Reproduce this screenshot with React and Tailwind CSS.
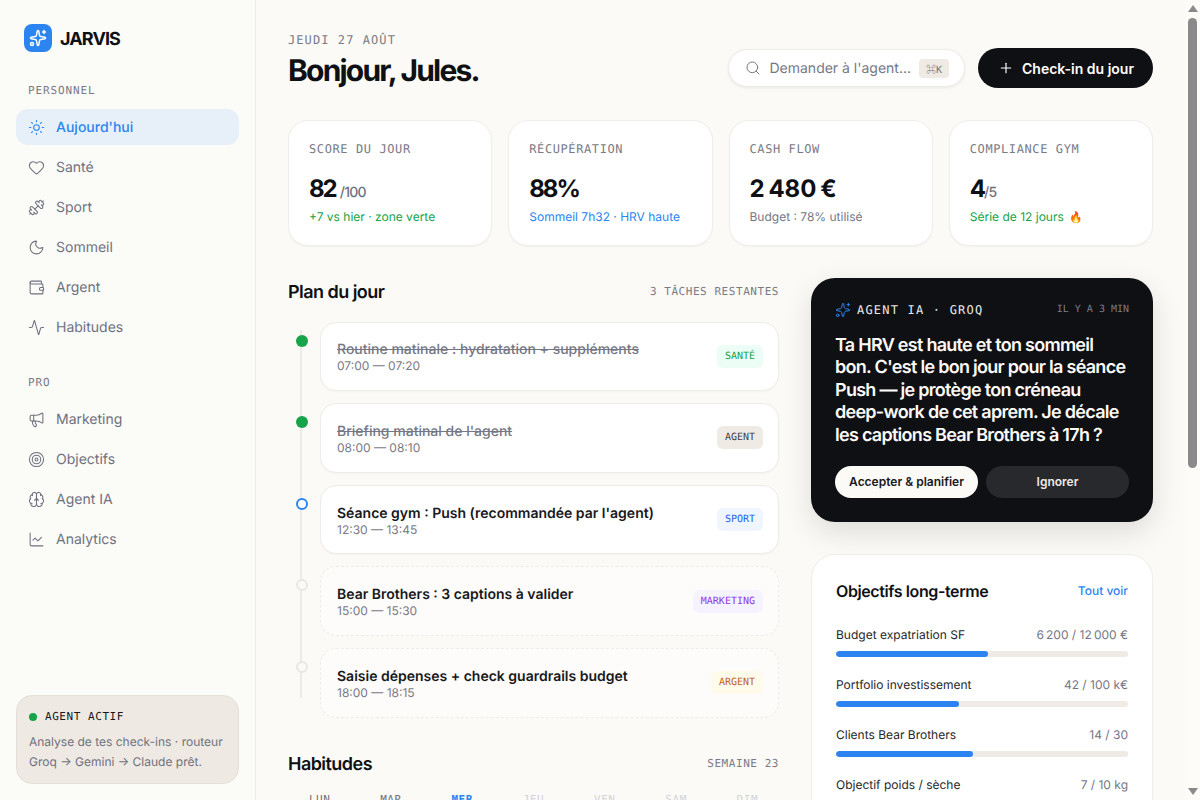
import {
  Sun,
  Heart,
  Dumbbell,
  Moon,
  Wallet,
  Activity,
  Megaphone,
  Target,
  Brain,
  LineChart,
  Sparkles,
  Search,
  Plus,
} from "lucide-react";

const mono = "font-['DejaVu_Sans_Mono',monospace]";

const personal = [
  { label: "Aujourd'hui", icon: Sun, active: true },
  { label: "Santé", icon: Heart },
  { label: "Sport", icon: Dumbbell },
  { label: "Sommeil", icon: Moon },
  { label: "Argent", icon: Wallet },
  { label: "Habitudes", icon: Activity },
];

const pro = [
  { label: "Marketing", icon: Megaphone },
  { label: "Objectifs", icon: Target },
  { label: "Agent IA", icon: Brain },
  { label: "Analytics", icon: LineChart },
];

const tasks = [
  { title: "Routine matinale : hydratation + suppléments", time: "07:00 — 07:20", tag: "SANTÉ", tagClass: "bg-[#ecfdf5] text-[#16a34a]", state: "done" },
  { title: "Briefing matinal de l'agent", time: "08:00 — 08:10", tag: "AGENT", tagClass: "bg-[#efebe4] text-[#3f3f46]", state: "done" },
  { title: "Séance gym : Push (recommandée par l'agent)", time: "12:30 — 13:45", tag: "SPORT", tagClass: "bg-[#eff6ff] text-[#2563eb]", state: "now" },
  { title: "Bear Brothers : 3 captions à valider", time: "15:00 — 15:30", tag: "MARKETING", tagClass: "bg-[#f5f3ff] text-[#9333ea]", state: "later" },
  { title: "Saisie dépenses + check guardrails budget", time: "18:00 — 18:15", tag: "ARGENT", tagClass: "bg-[#fffbeb] text-[#c2621a]", state: "later" },
];

const goals = [
  { label: "Budget expatriation SF", value: "6\u202f200 / 12\u202f000 €", pct: 52 },
  { label: "Portfolio investissement", value: "42 / 100 k€", pct: 42 },
  { label: "Clients Bear Brothers", value: "14 / 30", pct: 47 },
  { label: "Objectif poids / sèche", value: "7 / 10 kg", pct: 70 },
];

const days = [
  { d: "LUN", cls: "text-[#71717a]", on: true },
  { d: "MAR", cls: "text-[#71717a]", on: true },
  { d: "MER", cls: "text-[#2b84f0] font-bold", on: true },
  { d: "JEU", cls: "text-[#d4d4d8]" },
  { d: "VEN", cls: "text-[#d4d4d8]" },
  { d: "SAM", cls: "text-[#d4d4d8]" },
  { d: "DIM", cls: "text-[#d4d4d8]" },
];

function NavItem({ item }) {
  const Icon = item.icon;
  return (
    <div
      className={`flex items-center gap-[11px] h-9 px-3 rounded-xl text-sm ${
        item.active ? "bg-[#e7eff8] text-[#2b84f0] font-medium" : "text-[#6f7180]"
      }`}
    >
      <Icon size={17} strokeWidth={1.5} />
      <span className="pt-[2px]">{item.label}</span>
    </div>
  );
}

function Stat({ label, value, unit, unitClass, sub, subClass }) {
  return (
    <div className="bg-white rounded-[20px] border border-[#f0eeea] shadow-[0_1px_2px_rgba(0,0,0,0.04)] p-5 h-[125.6px]">
      <div className={`${mono} text-xs leading-4 tracking-[0.05em] text-[#7a7a86]`}>{label}</div>
      <div className="mt-4 flex items-baseline h-8 text-[#0f1014]">
        <span className="text-2xl font-bold tracking-[-0.085em]">{value}</span>
        {unit && <span className={`text-sm font-medium text-[#6f7180] tracking-[-0.05em] ${unitClass}`}>{unit}</span>}
      </div>
      <div className={`mt-1 text-xs leading-4 ${subClass}`}>{sub}</div>
    </div>
  );
}

function TaskRow({ task }) {
  const done = task.state === "done";
  const later = task.state === "later";
  return (
    <div className="flex">
      <div className="w-8 shrink-0 pl-2 pt-[13px] relative z-10">
        {done && <div className="w-3 h-3 rounded-full bg-[#16a34a]" />}
        {task.state === "now" && <div className="w-3 h-3 rounded-full bg-white border-2 border-[#2b84f0]" />}
        {later && <div className="w-3 h-3 rounded-full bg-[#fbfaf7] border-2 border-[#e9e7e1]" />}
      </div>
      <div
        className={`flex-1 h-[69.6px] rounded-2xl pl-4 pr-[15px] flex items-center justify-between border ${
          later ? "border-dashed border-[#eeece7] bg-[#fdfcfa]" : "border-[#eeece7] bg-white shadow-[0_1px_2px_rgba(0,0,0,0.03)]"
        }`}
      >
        <div className="pt-1">
          <div className={`text-sm leading-4 ${done ? "font-medium line-through text-[#757785]" : "font-semibold text-[#18181b]"}`}>
            {task.title}
          </div>
          <div className="text-xs leading-4 text-[#7a7a86]">{task.time}</div>
        </div>
        <span className={`${mono} text-[10px] leading-[23px] h-[23px] px-2 rounded-md ${task.tagClass}`}>
          {task.tag}
        </span>
      </div>
    </div>
  );
}

function Scrollbar() {
  return (
    <div className="w-[15px] shrink-0 bg-[#fdfcf9] flex flex-col items-center">
      <div className="mt-[5px] w-0 h-0 border-x-[5px] border-x-transparent border-b-[7px] border-b-[#8a8a8a]" />
      <div className="mt-[6px] w-[9px] h-[450px] rounded-[5px] bg-[#8a8a8a]" />
      <div className="mt-auto mb-[5px] w-0 h-0 border-x-[5px] border-x-transparent border-t-[7px] border-t-[#8a8a8a]" />
    </div>
  );
}

export default function App() {
  return (
    <div className="flex h-screen overflow-hidden bg-[#fbfaf7] font-['Inter',sans-serif] text-[#0f1014] [text-rendering:geometricPrecision]">
      <aside className="h-screen w-64 shrink-0 bg-[#fbfbf7] border-r border-[#eeece7] px-4 pt-6 pb-4 flex flex-col">
        <div className="flex items-center gap-2 px-2">
          <div className="w-7 h-7 rounded-lg bg-[#2b84f0] flex items-center justify-center text-white">
            <Sparkles size={18} strokeWidth={2} />
          </div>
          <span className="mt-1 text-lg leading-5 font-bold tracking-[-0.05em]">JARVIS</span>
        </div>

        <div className={`${mono} mt-[31px] px-3 text-[11px] leading-4 tracking-[0.08em] text-[#7a7a86]`}>PERSONNEL</div>
        <nav className="mt-[10px] flex flex-col gap-1">
          {personal.map((item) => (
            <NavItem key={item.label} item={item} />
          ))}
        </nav>

        <div className={`${mono} mt-[30px] px-3 text-[11px] leading-4 tracking-[0.08em] text-[#7a7a86]`}>PRO</div>
        <nav className="mt-[10px] flex flex-col gap-1">
          {pro.map((item) => (
            <NavItem key={item.label} item={item} />
          ))}
        </nav>

        <div className="mt-auto rounded-2xl border border-[#e4e0d9] bg-[#eeeae3] px-3 pt-[13px] pb-3 h-[89px]">
          <div className="flex items-center gap-2">
            <span className="w-2 h-2 rounded-full bg-[#16a34a]" />
            <span className={`${mono} text-[11px] leading-4 font-medium tracking-[0.05em] text-[#18181b]`}>AGENT ACTIF</span>
          </div>
          <p className="mt-[7px] text-xs leading-5 text-[#6f7180]">
            Analyse de tes check-ins · routeur Groq → Gemini → Claude prêt.
          </p>
        </div>
      </aside>

      <main className="flex-1 min-w-0 overflow-hidden px-8 pt-8">
        {/* Header */}
        <div className="flex items-start justify-between h-[88px]">
          <div>
            <div className={`${mono} text-xs leading-4 tracking-[0.09em] text-[#7a7a86]`}>JEUDI 27 AOÛT</div>
            <h1 className="mt-[5px] text-[30px] leading-9 font-bold tracking-[-0.06em]">Bonjour, Jules.</h1>
          </div>
          <div className="flex items-center gap-[13px] mt-4">
            <div className="flex items-center gap-2 h-[38px] pl-4 pr-[15px] rounded-full bg-white border border-[#eeece7] shadow-[0_1px_3px_rgba(0,0,0,0.08)] text-sm text-[#757785]">
              <Search size={16} strokeWidth={1.5} />
              <span className="pt-[2px]">Demander à l'agent...</span>
              <span className={`${mono} h-[19px] w-[30px] text-center rounded bg-[#efebe4] text-[10px] leading-[19px] text-[#6f7180]`}>
                <span className="font-['Noto_Sans_Mono_CJK_SC']">⌘</span>K
              </span>
            </div>
            <button className="flex items-center gap-2 h-10 pl-5 pr-[19px] rounded-full bg-[#0f1014] text-white text-sm font-semibold">
              <Plus size={16} strokeWidth={1.75} />
              <span className="pt-px">Check-in du jour</span>
            </button>
          </div>
        </div>

        {/* Stats */}
        <div className="grid grid-cols-4 gap-4">
          <Stat label="SCORE DU JOUR" value="82" unit="/100" unitClass="ml-1" sub="+7 vs hier · zone verte" subClass="text-[#16a34a]" />
          <Stat label="RÉCUPÉRATION" value="88%" sub="Sommeil 7h32 · HRV haute" subClass="text-[#2b84f0]" />
          <Stat label="CASH FLOW" value={"2\u202f480\u202f€"} sub="Budget : 78% utilisé" subClass="text-[#757785]" />
          <Stat
            label="COMPLIANCE GYM"
            value="4"
            unit="/5"
            sub={
              <>
                Série de 12 jours <span className="ml-[2px] text-[11px]">🔥</span>
              </>
            }
            subClass="text-[#16a34a]"
          />
        </div>

        <div className="mt-8 grid grid-cols-[491px_342px] gap-8">
          {/* Left column */}
          <div>
            <div className="flex items-center justify-between h-7">
              <h2 className="pt-0.5 text-lg font-semibold tracking-[-0.03em]">Plan du jour</h2>
              <span className={`${mono} pt-0.5 text-[11px] tracking-[0.05em] text-[#7a7a86]`}>3 TÂCHES RESTANTES</span>
            </div>
            <div className="relative mt-4 flex flex-col gap-3">
              <div className="absolute left-3 top-2 bottom-5 w-[2px] bg-[#ecebe6]" />
              {tasks.map((task) => (
                <TaskRow key={task.title} task={task} />
              ))}
            </div>

            <div className="mt-8 flex items-center justify-between h-7">
              <h2 className="pt-0.5 text-lg font-semibold tracking-[-0.03em]">Habitudes</h2>
              <span className={`${mono} pt-0.5 text-[11px] tracking-[0.05em] text-[#7a7a86]`}>SEMAINE 23</span>
            </div>
            <div className="mt-[14px] grid grid-cols-7 gap-2">
              {days.map((day) => (
                <div key={day.d} className="flex flex-col items-center gap-2">
                  <span className={`${mono} text-[11px] leading-4 tracking-[0.05em] ${day.cls}`}>{day.d}</span>
                  <div className={`w-full h-16 rounded-xl border border-[#eeece7] ${day.on ? "bg-[#e7eff8]" : "bg-white"}`} />
                </div>
              ))}
            </div>
          </div>

          {/* Right column */}
          <div className="flex flex-col gap-8">
            <div className="bg-[#0f1014] rounded-3xl p-6 shadow-[0_10px_30px_rgba(0,0,0,0.12)] h-[244px]">
              <div className="flex items-center justify-between h-4">
                <div className="flex items-center gap-1.5">
                  <Sparkles size={16} strokeWidth={1.5} className="text-[#2b84f0]" />
                  <span className={`${mono} text-xs font-medium tracking-[0.1em] text-[#e8e8ea]`}>AGENT IA · GROQ</span>
                </div>
                <span className={`${mono} text-[10px] text-[#7c7c84]`}>IL Y A 3 MIN</span>
              </div>
              <p className="mt-[17px] text-lg leading-[22.5px] font-semibold tracking-[-0.04em] text-[#fbfaf7]">
                Ta HRV est haute et ton sommeil bon. C'est le bon jour pour la séance Push — je protège ton créneau deep-work de cet aprem. Je décale les captions Bear Brothers à 17h ?
              </p>
              <div className="mt-[19px] grid grid-cols-2 gap-2">
                <button className="h-8 rounded-full bg-[#fbfaf7] text-[#18181b] text-xs font-semibold">Accepter &amp; planifier</button>
                <button className="h-8 rounded-full bg-[#28292d] text-[#e8e8ea] text-xs font-semibold">Ignorer</button>
              </div>
            </div>

            <div className="bg-white rounded-3xl border border-[#f0eeea] shadow-[0_1px_2px_rgba(0,0,0,0.04)] p-6">
              <div className="flex items-center justify-between">
                <h2 className="text-base font-semibold tracking-[-0.025em]">Objectifs long-terme</h2>
                <span className="text-xs font-medium text-[#2b84f0]">Tout voir</span>
              </div>
              <div className="mt-6 flex flex-col gap-5">
                {goals.map((goal) => (
                  <div key={goal.label}>
                    <div className="flex justify-between text-xs leading-4">
                      <span className="text-[#27272a]">{goal.label}</span>
                      <span className="text-[#757785]">{goal.value}</span>
                    </div>
                    <div className="mt-2 h-[6px] rounded-full bg-[#efebe4] overflow-hidden">
                      <div className="h-full rounded-full bg-[#2b84f0]" style={{ width: `${goal.pct}%` }} />
                    </div>
                  </div>
                ))}
              </div>
            </div>
          </div>
        </div>
      </main>
      <Scrollbar />
    </div>
  );
}
